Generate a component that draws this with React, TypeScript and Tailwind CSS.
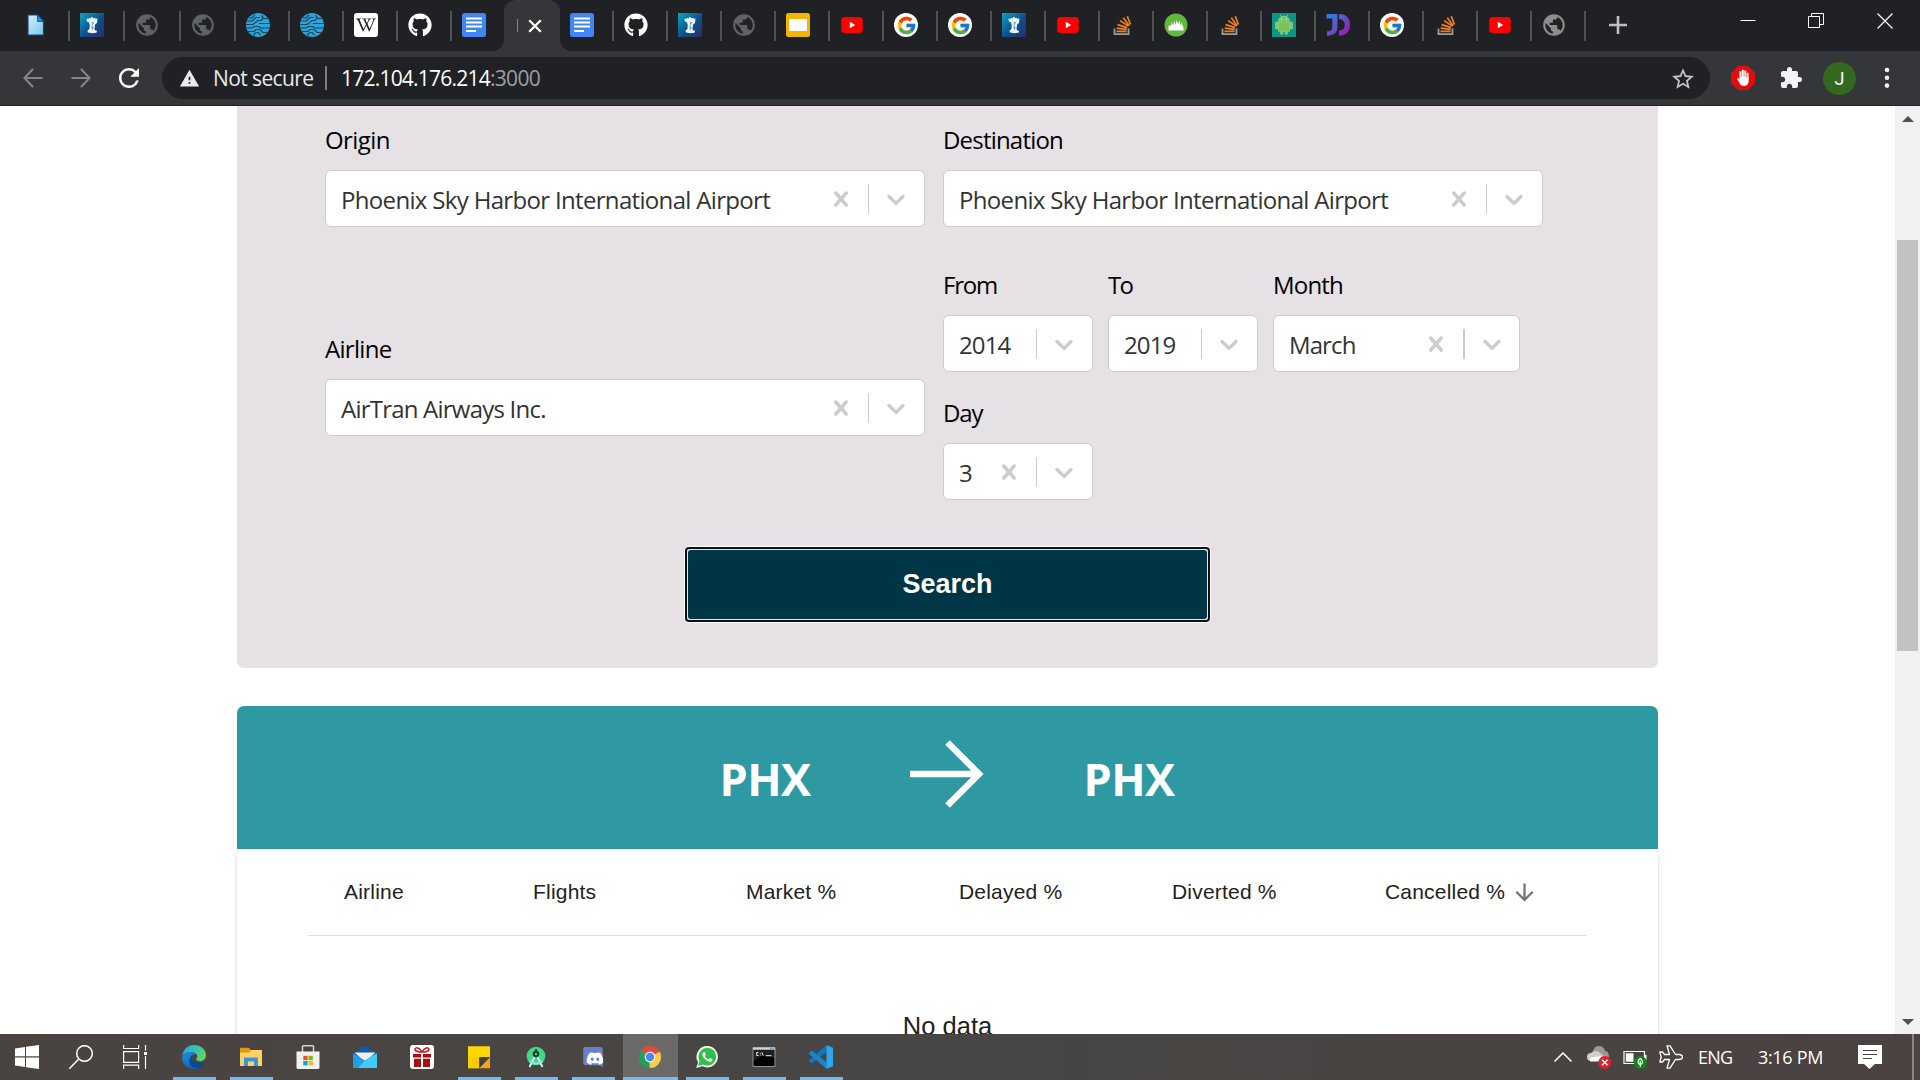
import type { ReactNode } from 'react';
import { FaGithub, FaHandPaper, FaDiscord, FaWikipediaW } from 'react-icons/fa';
import { FcGoogle } from 'react-icons/fc';
import { MdPublic, MdExtension, MdStarBorder, MdArrowDownward, MdWarning, MdRefresh } from 'react-icons/md';

/* ---------- tab favicons ---------- */

const FileIcon = () => (
  <svg viewBox="0 0 24 24" className="size-6">
    <defs>
      <linearGradient id="file" x1="0" y1="0" x2="1" y2="1">
        <stop offset="0" stopColor="#d5effc" />
        <stop offset="1" stopColor="#7cc6ee" />
      </linearGradient>
    </defs>
    <path d="M4 2h10l5.500 6v14H4z" fill="url(#file)" stroke="#0e4a78" strokeWidth="1.200" />
    <path d="M13.500 2l6 6.500h-6z" fill="#1595dc" stroke="#0e4a78" strokeWidth=".8" />
  </svg>
);

const RookIcon = () => (
  <svg viewBox="0 0 24 24" className="size-6">
    <defs>
      <linearGradient id="rook" x1="0" y1="0" x2="1" y2="1">
        <stop offset="0" stopColor="#0fa3bb" />
        <stop offset=".55" stopColor="#0d4f8c" />
        <stop offset="1" stopColor="#2b2c6b" />
      </linearGradient>
    </defs>
    <path d="M0 0h24v24H0z" fill="url(#rook)" />
    <path d="M6.500 5.500l2.200.5V4.800l2.300.6V4.300h2v1l2.300-.5v1l2.200-.4-.5 4.600-1.800 1.200-.7 4.500.5 1.500 2 .6-.5 2-4.500.5-4.500-1 .2-2 1.800-1.300.2-4-.8-2.800-2-.7z" fill="#eef6fa" />
    <path d="M12 8.500l2.200 1.200-2 2.500 1.500 2.800-1.200 2.500-1-3z" fill="#6fa0c4" />
  </svg>
);

const GlobeIcon = ({ bright }: { bright?: boolean }) => (
  <MdPublic className={bright ? '-ml-px size-[26px] text-[#8c8d8f]' : '-ml-px size-[26px] text-[#5f6368]'} />
);

const CircuitIcon = () => (
  <svg viewBox="0 0 24 24" className="size-6">
    <circle cx="12" cy="12" r="12" fill="#27a5de" />
    <g fill="none" stroke="#2b3f4c" strokeWidth="1.100">
      <path d="M1 8h5l4-3.500h4M3 5h3l3-3M0 11.500h7l5-4h3l2-2h5M13 10.500h11M0 15h6l2-1.500h5l1.500 1.500H24M2 18.500h6l2-2h4l3 3h4M8 23v-2l2-1.500h2l2.500 2.500M16 2v1.500l2 2" />
    </g>
  </svg>
);

const WikiIcon = () => (
  <span className="flex size-6 items-center justify-center rounded-[3px] bg-white">
    <FaWikipediaW className="size-5 text-[#202124]" />
  </span>
);

const GithubIcon = () => <FaGithub className="size-6 text-white" />;

const DocsIcon = () => (
  <svg viewBox="0 0 24 24" className="size-6">
    <rect width="24" height="24" rx="2.500" fill="#4285f4" />
    <path d="M4 5.500h16M4 9.500h16M4 13.500h16M4 18h10" stroke="#fff" strokeWidth="2.200" />
  </svg>
);

const SlidesIcon = () => (
  <svg viewBox="0 0 24 24" className="size-6">
    <rect width="24" height="24" rx="2.500" fill="#f5b400" />
    <path d="M3 6h18v12H3z" fill="#fff" />
  </svg>
);

const YoutubeIcon = () => (
  <svg viewBox="0 0 24 24" className="size-6">
    <rect x="1.200" y="4" width="21.600" height="16" rx="3.500" fill="#f00" />
    <path d="M9.800 8.800v6.400l5.400-3.200z" fill="#fff" />
  </svg>
);

const GoogleIcon = () => (
  <span className="flex size-6 items-center justify-center rounded-full bg-white">
    <FcGoogle className="size-[21px]" />
  </span>
);

const StackIcon = () => (
  <svg viewBox="0 0 24 24" className="size-6" fill="none">
    <path d="M4.500 15.500v5.700h14v-5.700" stroke="#9c9c9c" strokeWidth="1.800" />
    <path d="M6.500 18.300h10M6.700 15.200l9.900 1.200M7.600 11.600l9.500 3M10 7.600l8.400 5.400M13.300 4.800l6 7.900M17.300 3.300l3.200 8.200" stroke="#ef8023" strokeWidth="1.700" />
  </svg>
);

const ChartIcon = () => (
  <svg viewBox="0 0 24 24" className="size-6">
    <circle cx="12" cy="12" r="11.500" fill="#62b83f" />
    <path d="M4.500 17.500v-4l1-1.500 1.300 1.300 1-4.300 1.300 3.500L10.300 8l1.200 4 1.300-5 1.300 4.500L15.300 7l1 5.500 1.200-3.500 1 4 1 1v3.500z" fill="#fff" />
  </svg>
);

const AndroidIcon = () => (
  <svg viewBox="0 0 24 24" className="size-6">
    <path d="M0 0h24v24H0z" fill="#0c9688" />
    <g fill="#79c257" stroke="#b6e08f" strokeWidth=".6">
      <path d="M6.500 8.300a5.500 5 0 0 1 11 0z" />
      <path d="M6.500 9.200h11v9h-2.200v3h-2.100v-3h-2.400v3H8.700v-3H6.500z" />
      <rect x="3.500" y="9" width="2.200" height="7" rx="1.100" />
      <rect x="18.300" y="9" width="2.200" height="7" rx="1.100" />
      <path d="M8.200 2l1.600 2.400M15.800 2l-1.600 2.400" />
    </g>
    <circle cx="9.700" cy="6.200" r=".6" fill="#fff" />
    <circle cx="14.300" cy="6.200" r=".6" fill="#fff" />
  </svg>
);

const DelimiterIcon = () => (
  <svg viewBox="0 0 24 24" className="size-6">
    <defs>
      <linearGradient id="delim" gradientUnits="userSpaceOnUse" x1="0" y1="0" x2="24" y2="20">
        <stop offset="0" stopColor="#1f8cf0" />
        <stop offset=".5" stopColor="#5b57c8" />
        <stop offset="1" stopColor="#a313b5" />
      </linearGradient>
    </defs>
    <g fill="url(#delim)">
      <path d="M.5 1h11v13.500c0 5-3.500 8-10.500 8.200v-4.400c4 0 5.300-1.300 5.300-4V5.400H.5z" />
      <path d="M13 1c7.500 0 11 4.600 11 11s-3.500 10.700-11 10.700v-5.300c4 0 5.700-2 5.700-5.400S17 6.300 13 6.300z" />
    </g>
  </svg>
);

const leftTabs: { icon: ReactNode; cell: string }[] = [
  { icon: <FileIcon />, cell: 'w-[70px] pl-6' },
  { icon: <RookIcon />, cell: 'w-[55px] pl-[10px]' },
  { icon: <GlobeIcon />, cell: 'w-[56px] pl-[10px]' },
  { icon: <GlobeIcon />, cell: 'w-[55px] pl-[10px]' },
  { icon: <CircuitIcon />, cell: 'w-[54px] pl-[10px]' },
  { icon: <CircuitIcon />, cell: 'w-[54px] pl-[10px]' },
  { icon: <WikiIcon />, cell: 'w-[54px] pl-[10px]' },
  { icon: <GithubIcon />, cell: 'w-[54px] pl-[10px]' },
];

const rightTabs: ReactNode[] = [
  <DocsIcon />, <GithubIcon />, <RookIcon />, <GlobeIcon />, <SlidesIcon />, <YoutubeIcon />, <GoogleIcon />,
  <GoogleIcon />, <RookIcon />, <YoutubeIcon />, <StackIcon />, <ChartIcon />, <StackIcon />, <AndroidIcon />,
  <DelimiterIcon />, <GoogleIcon />, <StackIcon />, <YoutubeIcon />, <GlobeIcon bright />,
];

function TabCell({ children, className }: { children: ReactNode; className: string }) {
  return (
    <div className={`flex h-[50px] shrink-0 items-center justify-between ${className}`}>
      {children}
      <span className="mt-[2px] h-[30px] w-[2px] bg-[#505155]" />
    </div>
  );
}

function TabStrip() {
  return (
    <div className="flex h-[51px] bg-[#202124]">
      {leftTabs.map((t, i) => (
        <TabCell key={i} className={t.cell}>
          {t.icon}
        </TabCell>
      ))}
      <div className="flex h-[50px] w-[52px] items-center pl-[10px]">
        <DocsIcon />
      </div>
      <div className="relative flex h-[51px] w-[56px] shrink-0 items-center rounded-t-[12px] bg-[#35363a]">
        <svg viewBox="0 0 12 12" className="absolute bottom-0 -left-3 size-3" fill="#35363a">
          <path d="M12 0v12H0C7 12 12 7 12 0z" />
        </svg>
        <svg viewBox="0 0 12 12" className="absolute -right-3 bottom-0 size-3" fill="#35363a">
          <path d="M0 0v12h12C5 12 0 7 0 0z" />
        </svg>
        <span className="ml-[13px] h-[13px] w-px bg-[#2fa4d8]" />
        <svg viewBox="0 0 14 14" className="ml-[10px] size-[14px]" stroke="#fff" strokeWidth="2.300">
          <path d="M1.200 1.200l11.600 11.600M12.800 1.200L1.200 12.800" />
        </svg>
      </div>
      {rightTabs.map((icon, i) => (
        <TabCell key={i} className="w-[54px] pl-[10px]">
          {icon}
        </TabCell>
      ))}
      <svg viewBox="0 0 18 18" className="mt-4 ml-[23px] size-[18px]" stroke="#bdc1c6" strokeWidth="2.600">
        <path d="M9 0v18M0 9h18" />
      </svg>
      <div className="ml-auto flex pr-[27px] pt-[13px]">
        <svg viewBox="0 0 16 16" className="size-4" stroke="#fff">
          <path d="M.5 7.500h15" />
        </svg>
        <svg viewBox="0 0 16 16" className="ml-[52px] size-4" stroke="#fff" fill="none">
          <path d="M.5 3.500h11v11H.5zM3.500 3.500v-3h12v11h-4" />
        </svg>
        <svg viewBox="0 0 16 16" className="ml-[53px] size-4" stroke="#fff" strokeWidth="1.200">
          <path d="M.5 .5l15 15M15.500 .5l-15 15" />
        </svg>
      </div>
    </div>
  );
}

function Toolbar() {
  return (
    <div className="flex h-[55px] items-center border-b border-[#202124] bg-[#35363a]">
      <svg viewBox="0 0 20 20" className="ml-[23px] size-5" fill="none" stroke="#85868a" strokeWidth="2">
        <path d="M19.500 10H1.500M10 1L1.500 10l8.500 9" />
      </svg>
      <svg viewBox="0 0 20 20" className="ml-7 size-5" fill="none" stroke="#85868a" strokeWidth="2">
        <path d="M.5 10h18M10 1l8.500 9-8.500 9" />
      </svg>
      <MdRefresh className="ml-[23px] size-[30px] text-white" />
      <div className="ml-[18px] flex h-[42px] w-[1548px] items-center rounded-full bg-[#202124] pr-[14px] pl-[17px] font-['Open_Sans',sans-serif] text-[21px]">
        <MdWarning className="mt-px size-[21px] text-[#e8eaed]" />
        <span className="mt-[2px] ml-[13px] w-[112px] tracking-[-0.6px] whitespace-nowrap text-[#e8eaed]">Not secure</span>
        <span className="h-6 w-[2px] bg-[#7b7d81]" />
        <span className="mt-[2px] ml-[14px] tracking-[-0.78px] text-white">172.104.176.214</span>
        <span className="mt-[2px] tracking-[-0.7px] text-[#9aa0a6]">:3000</span>
        <MdStarBorder className="mt-px ml-auto size-[26px] text-[#c3c5c8]" />
      </div>
      <svg viewBox="0 0 24 24" className="ml-[21px] size-6">
        <path d="M7 0h10l7 7v10l-7 7H7l-7-7V7z" fill="#e40d0d" />
        <path d="M6 12.500l1.300-.6 1.200 2V5.300h1.900v5.500h.5V3.800h1.900v7h.5V4.500h1.900v6.800h.5V6.800h1.800l.2 7.500c0 3.500-1.500 5.700-4.300 5.700-2.600 0-4-1-5-3.200z" fill="#fff" />
      </svg>
      <MdExtension className="ml-6 size-[24px] text-[#f1f3f4]" />
      <span className="ml-5 flex size-[33px] items-center justify-center rounded-full bg-[#33691e] font-['Roboto',sans-serif] text-[18px] text-white">
        J
      </span>
      <svg viewBox="0 0 6 22" className="ml-[28px] h-[22px] w-[6px]" fill="#f1f3f4">
        <circle cx="3" cy="3" r="2.300" />
        <circle cx="3" cy="10.800" r="2.300" />
        <circle cx="3" cy="18.600" r="2.300" />
      </svg>
    </div>
  );
}

/* ---------- search form ---------- */

type FieldProps = { label: string; value: string; width: string; ls: string; labelLs: string; clear?: boolean; thick?: boolean };

function Field({ label, value, width, ls, labelLs, clear, thick }: FieldProps) {
  return (
    <div className={width}>
      <div className={`mb-[14px] h-8 text-2xl leading-8 text-black ${labelLs}`}>{label}</div>
      <div className="flex h-[57px] items-center rounded-[6px] border border-[#ccc] bg-white">
        <span className={`mt-[3px] ml-[15px] flex-1 text-2xl leading-8 whitespace-nowrap text-[#333] ${ls}`}>{value}</span>
        {clear && (
          <svg viewBox="0 0 20 20" className="mr-3 size-[30px] shrink-0" fill="#ccc">
            <path d="M14.348 14.849c-0.469 0.469-1.229 0.469-1.697 0l-2.651-3.030-2.651 3.029c-0.469 0.469-1.229 0.469-1.697 0-0.469-0.469-0.469-1.229 0-1.697l2.758-3.150-2.759-3.152c-0.469-0.469-0.469-1.228 0-1.697s1.228-0.469 1.697 0l2.652 3.031 2.651-3.031c0.469-0.469 1.228-0.469 1.697 0s0.469 1.229 0 1.697l-2.758 3.152 2.758 3.150c0.469 0.469 0.469 1.229 0 1.698z" />
          </svg>
        )}
        <span className={thick ? 'h-[30px] w-[2px] shrink-0 bg-[#ccc]' : 'h-[30px] w-px shrink-0 bg-[#ccc]'} />
        <svg viewBox="0 0 20 20" className={thick ? 'mx-3 size-[30px] shrink-0' : 'mr-[13px] ml-3 size-[30px] shrink-0'} fill="#ccc">
          <path d="M4.516 7.548c0.436-0.446 1.043-0.481 1.576 0l3.908 3.747 3.908-3.747c0.533-0.481 1.141-0.446 1.574 0 0.436 0.445 0.408 1.197 0 1.615-0.406 0.418-4.695 4.502-4.695 4.502-0.217 0.223-0.502 0.335-0.787 0.335s-0.570-0.112-0.789-0.335c0 0-4.287-4.084-4.695-4.502s-0.436-1.170 0-1.615z" />
        </svg>
      </div>
    </div>
  );
}

function SearchForm() {
  return (
    <section className="h-[562px] rounded-b-[7px] bg-[#e6e1e5] px-[88px] pt-[18px] font-['Open_Sans',sans-serif]">
      <div className="flex gap-[18px]">
        <Field label="Origin" value="Phoenix Sky Harbor International Airport" width="w-[600px]" ls="tracking-[-0.67px]" labelLs="tracking-[-0.56px]" clear />
        <Field label="Destination" value="Phoenix Sky Harbor International Airport" width="w-[600px]" ls="tracking-[-0.67px]" labelLs="tracking-[-0.8px]" clear />
      </div>
      <div className="mt-[42px] flex items-center gap-[18px]">
        <Field label="Airline" value="AirTran Airways Inc." width="w-[600px]" ls="tracking-[-0.78px]" labelLs="tracking-[-0.7px]" clear />
        <div className="flex w-[600px] flex-wrap gap-x-[15px] gap-y-[25px]">
          <Field label="From" value="2014" width="w-[150px]" ls="tracking-[-0.9px]" labelLs="tracking-[-1.2px]" />
          <Field label="To" value="2019" width="w-[150px]" ls="tracking-[-0.9px]" labelLs="tracking-[-1.7px]" />
          <Field label="Month" value="March" width="w-[247px]" ls="tracking-[-0.9px]" labelLs="tracking-[-0.8px]" clear thick />
          <Field label="Day" value="3" width="w-[150px]" ls="tracking-[-0.7px]" labelLs="tracking-[-1.1px]" clear />
        </div>
      </div>
      <button className="mt-[46px] ml-[359px] block h-[77px] w-[527px] rounded-[5px] border border-white bg-white">
        <span className="flex h-[75px] items-center justify-center rounded-[4px] border-2 border-[#101010] bg-[#e5e5e5] p-px">
          <span className="flex h-full w-full items-center justify-center rounded-[3px] bg-[#003545] pb-px font-['Liberation_Sans',sans-serif] text-[27px] leading-8 font-bold text-white">
            Search
          </span>
        </span>
      </button>
    </section>
  );
}

/* ---------- results ---------- */

function Results() {
  return (
    <section className="mt-[38px]">
      <div className="flex h-[143px] items-center justify-center gap-[98px] rounded-t-[7px] bg-[#2e99a3] pt-[2px] pr-px font-['Open_Sans',sans-serif] text-[45px] leading-[60px] font-bold tracking-[-0.6px] text-white">
        <span>PHX</span>
        <svg viewBox="0 0 77 68" className="mb-2.5 h-[68px] w-[77px]" fill="none" stroke="#fff" strokeWidth="6.500">
          <path d="M1 34h69M38.500 2.500L70 34 38.500 65.500" />
        </svg>
        <span>PHX</span>
      </div>
      <div className="h-[300px] rounded-[6px] bg-white px-[71px] font-['Liberation_Sans',sans-serif] text-[21px] text-[#212121] shadow-[0_3px_1px_-2px_rgba(0,0,0,0.2),0_2px_2px_0_rgba(0,0,0,0.14),0_1px_5px_0_rgba(0,0,0,0.12)]">
        <div className="grid h-[87px] grid-cols-[189px_213px_213px_213px_213px_1fr] items-center border-b border-[#e0e0e0] pl-[36px] tracking-[0.2px] whitespace-nowrap">
          <span>Airline</span>
          <span>Flights</span>
          <span>Market %</span>
          <span>Delayed %</span>
          <span>Diverted %</span>
          <span className="flex items-center gap-[6px]">
            Cancelled %
            <MdArrowDownward className="size-[27px] text-[#757575]" />
          </span>
        </div>
        <p className="mt-[72px] text-center text-[25.5px] leading-9">No data</p>
      </div>
    </section>
  );
}

function Scrollbar() {
  return (
    <div className="flex w-[25px] shrink-0 flex-col items-center bg-[#f1f1f1]">
      <svg viewBox="0 0 12 6" className="mt-[10px] h-[6px] w-3" fill="#505050">
        <path d="M0 6l6-6 6 6z" />
      </svg>
      <div className="mt-[118px] h-[411px] w-[21px] bg-[#c1c1c1]" />
      <svg viewBox="0 0 12 6" className="mt-auto mb-[9px] h-[6px] w-3" fill="#505050">
        <path d="M0 0l6 6 6-6z" />
      </svg>
    </div>
  );
}

/* ---------- taskbar ---------- */

const WindowsIcon = () => (
  <svg viewBox="0 0 24 24" className="size-6" fill="#fff">
    <path d="M0 3.400L10 2v9.300H0zM11 1.800L24 0v11.300H11zM0 12.500h10V22L0 20.600zM11 12.500h13V24l-13-1.800z" />
  </svg>
);

const SearchIcon = () => (
  <svg viewBox="0 0 24 24" className="size-6" fill="none" stroke="#fff" strokeWidth="1.500">
    <circle cx="15.500" cy="8.500" r="7.800" />
    <path d="M9.800 14L0 24" />
  </svg>
);

const TaskViewIcon = () => (
  <svg viewBox="0 0 24 24" className="size-6" fill="none" stroke="#fff" strokeWidth="1.200">
    <path d="M.6 6.600h15v10.800h-15zM.6 0v3.500h15V0M.6 24v-3.800h15V24M22.500 0v5.500M22.500 11v13" />
    <path d="M21 7h3v3h-3z" fill="#fff" stroke="none" />
  </svg>
);

const EdgeIcon = () => (
  <svg viewBox="0 0 24 24" className="size-6">
    <defs>
      <linearGradient id="edgeTop" x1="0" y1="0" x2="1" y2=".3">
        <stop offset="0" stopColor="#2aa7dc" />
        <stop offset=".6" stopColor="#35c1b8" />
        <stop offset="1" stopColor="#5fd65c" />
      </linearGradient>
      <linearGradient id="edgeBody" x1="0" y1="0" x2=".4" y2="1">
        <stop offset="0" stopColor="#1b8fd8" />
        <stop offset="1" stopColor="#1466c0" />
      </linearGradient>
    </defs>
    <path d="M.2 11C1 4.500 6 0 12 0c6.800 0 12 4.800 12 10.200 0 3.700-2.700 6-6 6-2.500 0-3.800-.9-3.800-1.900 0-.8 1-1.200 1-3C15.200 8.500 12 7 8.500 7 4.800 7 1.800 8.600.2 11z" fill="url(#edgeTop)" />
    <path d="M.1 11.500C1.500 8.500 5 7 8.500 7c2.500 0 4.500.8 5.700 2-3.200-.4-5.700 2.200-5.700 6 0 4.500 3.500 8 8 8-1.400.7-3 1-4.500 1C5 24-.5 18.500.1 11.500z" fill="url(#edgeBody)" />
    <path d="M11 10c-2.500 1.200-4 3.500-3.700 6.500.3 4 3.500 7 7.700 7 3.400-.6 6-2.700 7.600-5.600.2-.5-.2-.8-.7-.5-1 .5-2.300.8-3.900.8-4.500 0-8.200-2.600-8-5.700 0-.9.400-1.800 1-2.500z" fill="#0b4a94" />
  </svg>
);

const ExplorerIcon = () => (
  <svg viewBox="0 0 24 24" className="size-6">
    <path d="M1 3.500c0-.5.400-.8.800-.8h8l2 2.300H22c.6 0 1 .4 1 1V10H1z" fill="#dc9a0c" />
    <path d="M1 7.500h9.500L12 5h11v16H1z" fill="#ffd262" />
    <path d="M5 13.500c0-.6.400-1 1-1h12c.6 0 1 .4 1 1V21h-4v-4.500H9V21H5z" fill="#3a95dd" />
  </svg>
);

const StoreIcon = () => (
  <svg viewBox="0 0 24 24" className="size-6">
    <path d="M6.500 7V1.500c0-.5.300-.8.800-.8h9.400c.5 0 .8.300.8.800V7" fill="none" stroke="#cfd0d2" strokeWidth="1.500" />
    <path d="M.5 6.500h23v16c0 .8-.6 1.500-1.500 1.500H2C1.100 24 .5 23.300.5 22.500z" fill="#f1f1f2" />
    <path d="M7.300 10.800h4.300v4.300H7.300z" fill="#f25022" />
    <path d="M12.500 10.800h4.300v4.300h-4.300z" fill="#7fba00" />
    <path d="M7.300 16h4.300v4.300H7.300z" fill="#00a4ef" />
    <path d="M12.500 16h4.300v4.300h-4.300z" fill="#ffb900" />
  </svg>
);

const MailIcon = () => (
  <svg viewBox="0 0 24 24" className="size-6">
    <path d="M0 8.500L12 .8l12 7.700v5H0z" fill="#0b5db0" />
    <path d="M1.500 7.500h21L12 17z" fill="#f0f2f4" />
    <path d="M0 8.300l12 7.200 12-7.200V23H0z" fill="#1f9fe8" />
    <path d="M24 8.300V23L5 23l7-7.500z" fill="#3fcdf7" />
  </svg>
);

const GiftIcon = () => (
  <svg viewBox="0 0 24 24" className="size-6">
    <rect width="24" height="24" rx="3" fill="#fff" />
    <g fill="none" stroke="#c9191e" strokeWidth="1.500">
      <path d="M12 7C9 7 4.800 6.500 5 4.300 5.300 2 9.500 2 12 7zM12 7c3 0 7.200-.5 7-2.700C18.700 2 14.500 2 12 7z" />
    </g>
    <path d="M3 9h8v3.500H3zM13 9h8v3.500h-8zM4 13.800h7V22H4zM13 13.800h7V22h-7z" fill="#a50f13" />
  </svg>
);

const NotesIcon = () => (
  <svg viewBox="0 0 24 24" className="size-6">
    <path d="M1 1.200h22v11H12v11H1z" fill="#ffd800" />
    <path d="M1 12h11.500v11.200H1z" fill="#fccb04" />
    <path d="M12.300 12.200H23L12.300 23z" fill="#3f4143" />
    <path d="M23 12.200v11H12.300z" fill="#f3a70c" />
  </svg>
);

const StudioIcon = () => (
  <svg viewBox="0 0 24 24" className="size-6">
    <circle cx="12" cy="11" r="9.300" fill="#3ddc84" />
    <path d="M12 4v3" stroke="#0b3342" strokeWidth="2" />
    <circle cx="12" cy="9" r="3.300" fill="#0b3342" />
    <circle cx="12" cy="9" r="1.200" fill="#3ddc84" />
    <path d="M10.500 12L5.500 22M13.500 12l5 10" stroke="#dff3f8" strokeWidth="1.900" />
    <path d="M5.500 16.500c4 2.500 9 2.500 13 0" stroke="#a9dfe9" strokeWidth="1.700" fill="none" />
  </svg>
);

const DiscordTile = () => (
  <svg viewBox="0 0 24 24" className="size-6">
    <path d="M4.500 2h15c1.400 0 2.300 1 2.300 2.200v18.300l-3.500-2.300H4.500c-1.400 0-2.300-1-2.300-2.200V4.200C2.200 3 3.100 2 4.500 2z" fill="#6c7fc9" />
    <FaDiscord x="5" y="4.500" width="14" height="14" color="#fff" />
  </svg>
);

const ChromeIcon = () => (
  <svg viewBox="0 0 24 24" className="size-6">
    <path d="M12 12L2.470 6.500A11 11 0 0 1 21.530 6.500z" fill="#de4b3c" />
    <path d="M12 12L21.530 6.500A11 11 0 0 1 12 23z" fill="#fccc44" />
    <path d="M12 12L12 23A11 11 0 0 1 2.470 6.500z" fill="#1da15f" />
    <path d="M12 6.500h9.530L12 12z" fill="#de4b3c" />
    <path d="M16.760 14.750L12 23l-1-9z" fill="#fccc44" />
    <path d="M7.240 14.750L2.470 6.500 12 11z" fill="#1da15f" />
    <circle cx="12" cy="12" r="5.400" fill="#f1f1f1" />
    <circle cx="12" cy="12" r="4.200" fill="#4a87ee" />
  </svg>
);

const WhatsappIcon = () => (
  <svg viewBox="0 0 24 24" className="size-6">
    <path d="M12.300 1a10.700 10.700 0 1 1-5 20.200L1.200 23l1.900-5.700A10.700 10.700 0 0 1 12.300 1z" fill="#f4f8f4" />
    <circle cx="12.300" cy="11.700" r="8.900" fill="#2fc04a" />
    <path d="M3 21l1.500-5 3.500 3.600z" fill="#2fc04a" />
    <path d="M9.300 7c-.8 0-1.900 1-1.900 2.500 0 3 4.800 7.300 7.500 7.300 1.500 0 2.600-1.200 2.600-2.400 0-.4-2.400-1.700-2.800-1.500-.5.300-.9 1.500-1.400 1.300-1.400-.5-2.800-1.800-3.500-3.200-.2-.5.9-1 .9-1.600C10.700 9 10 7 9.300 7z" fill="#fff" />
  </svg>
);

const TerminalIcon = () => (
  <svg viewBox="0 0 24 24" className="size-6">
    <path d="M1 2.500h22v19H1z" fill="#000" stroke="#8d9499" strokeWidth="1" />
    <path d="M1 2.500h22v2.300H1z" fill="#c9d6df" />
    <path d="M18 3.600h1.200M20.500 3.600h1.200" stroke="#58789a" strokeWidth="1.200" />
    <path d="M1.500 21V16L12 9.500l11 4V5H1.500z" fill="#fff" opacity=".12" />
    <path d="M6.500 7.500H4.700v3h1.800M8.300 8v.8M8.300 9.800v.8M9.800 7.300l1.500 3.500M13.500 10.700h6" stroke="#f2f2f2" strokeWidth="1" fill="none" />
  </svg>
);

const VscodeIcon = () => (
  <svg viewBox="0 0 24 24" className="size-6">
    <path d="M17.500 0v6.700L3.500 18 1.800 17.900 0 16.300v-1z" fill="#0f76c0" />
    <path d="M17.500 24v-6.700L3.500 6 1.800 6.100 0 7.700v1z" fill="#1488d4" />
    <path d="M17.500 0L24 2.800v18.400L17.500 24z" fill="#2aa9f2" />
  </svg>
);

const apps: { icon: ReactNode; open?: boolean; active?: boolean }[] = [
  { icon: <EdgeIcon />, open: true },
  { icon: <ExplorerIcon />, open: true },
  { icon: <StoreIcon /> },
  { icon: <MailIcon /> },
  { icon: <GiftIcon /> },
  { icon: <NotesIcon />, open: true },
  { icon: <StudioIcon />, open: true },
  { icon: <DiscordTile />, open: true },
  { icon: <ChromeIcon />, active: true },
  { icon: <WhatsappIcon />, open: true },
  { icon: <TerminalIcon />, open: true },
  { icon: <VscodeIcon />, open: true },
];

function Taskbar() {
  return (
    <footer className="flex h-[46px] bg-linear-to-r from-[#4a4441] via-[#474644] to-[#4b4241] font-['Open_Sans',sans-serif] text-[18px] text-white">
      <div className="flex w-[54px] items-center justify-center"><WindowsIcon /></div>
      <div className="flex w-[54px] items-center justify-center"><SearchIcon /></div>
      <div className="mr-1 flex w-[54px] items-center justify-center"><TaskViewIcon /></div>
      {apps.map((a, i) => (
        <div key={i} className="flex w-[57px] justify-center">
          <div className={a.active ? 'flex h-full w-[55px] flex-col items-center bg-[#6c6a69]' : 'flex h-full w-[43px] flex-col items-center'}>
            <div className="flex h-[43px] items-center pt-[3px] pr-px">{a.icon}</div>
            {(a.open || a.active) && <div className="h-[3px] w-full bg-[#76b9ed]" />}
          </div>
        </div>
      ))}
      <div className="ml-auto flex items-center">
        <svg viewBox="0 0 18 10" className="mr-[15px] h-[10px] w-[18px]" fill="none" stroke="#fff" strokeWidth="1.500">
          <path d="M.5 9.500L9 1l8.500 8.500" />
        </svg>
        <svg viewBox="0 0 24 24" className="size-6">
          <path d="M6 8a6 6 0 0 1 12-2c3 0 4 3 4 6H6z" fill="#9b9a99" />
          <path d="M4 16a4 4 0 0 1 0-8 6 6 0 0 1 8-1l6 5v4z" fill="#cfcfcf" />
          <path d="M3.500 16.500C2 15 2.500 12.500 5 12.500l9-1.500v5.500z" fill="#fff" />
          <circle cx="17.800" cy="17.500" r="6.500" fill="#d8232f" />
          <path d="M15 14.700l5.600 5.600M20.600 14.700L15 20.300" stroke="#fff" strokeWidth="1.400" />
        </svg>
        <svg viewBox="0 0 24 24" className="ml-3 size-6">
          <path d="M1 6.500h20.500v12H1z" fill="none" stroke="#fff" strokeWidth="1.200" />
          <path d="M22 10h1.500v5H22zM2.800 8.300h7.700v8.500H2.800z" fill="#fff" />
          <circle cx="17.300" cy="17.300" r="6.500" fill="#0b8a16" />
          <path d="M17.300 13.500c-3 2-3 5 0 6.300 3-1.300 3-4.300 0-6.300zM17.300 16v6" stroke="#fff" fill="none" strokeWidth="1.200" />
        </svg>
        <svg viewBox="0 0 24 24" className="ml-3 size-6" fill="none" stroke="#fff" strokeWidth="1.300" strokeLinejoin="round">
          <path d="M8 .8h3l5.500 8.700h4c4 .6 4 4.400 0 5h-4L11 23.200H8l2.500-8.700H5.500L3.500 17H.8l1.400-5L.8 7h2.700l2 2.500h5z" />
        </svg>
        <span className="ml-[15px] w-[60px] tracking-[-0.8px]">ENG</span>
        <span className="w-[100px] tracking-[-0.33px] whitespace-nowrap">3:16 PM</span>
        <svg viewBox="0 0 24 24" className="size-6">
          <path d="M0 0h24v19h-7l-5.500 5L6 19H0z" fill="#fff" />
          <path d="M5 5.500h14M5 9.500h14M5 13.500h9" stroke="#4b4241" strokeWidth="1.200" />
        </svg>
        <span className="mr-[6px] ml-[30px] h-[46px] w-[2px] bg-[#8b8583]" />
      </div>
    </footer>
  );
}

export default function App() {
  return (
    <div className="flex h-[1080px] w-[1920px] flex-col overflow-hidden bg-white">
      <TabStrip />
      <Toolbar />
      <main className="flex h-[928px] overflow-hidden">
        <div className="flex-1 overflow-hidden">
          <div className="mx-auto w-[1421px]">
            <SearchForm />
            <Results />
          </div>
        </div>
        <Scrollbar />
      </main>
      <Taskbar />
    </div>
  );
}
